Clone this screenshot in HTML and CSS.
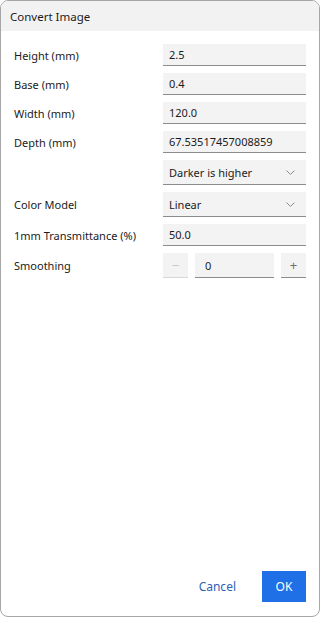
FILE: index.html
```html
<!DOCTYPE html>
<html lang="en">

<head>
    <meta charset="UTF-8">
    <meta name="viewport" content="width=device-width, initial-scale=1.0">
    <title>Convert Image</title>
    <link rel="stylesheet" href="styles.css">
</head>

<body>
    <div class="dialog">
        <div class="title-bar">Convert Image</div>
        <div class="form">
            <label class="label">Height (mm)</label>
            <div class="field">2.5</div>

            <label class="label">Base (mm)</label>
            <div class="field">0.4</div>

            <label class="label">Width (mm)</label>
            <div class="field">120.0</div>

            <label class="label">Depth (mm)</label>
            <div class="field">67.53517457008859</div>

            <span></span>
            <div class="field select">
                <span>Darker is higher</span>
                <svg class="chevron" width="9" height="5" viewBox="0 0 9 5"><path d="M0.5 0.5 L4.5 4.5 L8.5 0.5" fill="none" stroke="#8a8a8a" stroke-width="1"/></svg>
            </div>

            <label class="label">Color Model</label>
            <div class="field select">
                <span>Linear</span>
                <svg class="chevron" width="9" height="5" viewBox="0 0 9 5"><path d="M0.5 0.5 L4.5 4.5 L8.5 0.5" fill="none" stroke="#8a8a8a" stroke-width="1"/></svg>
            </div>

            <label class="label">1mm Transmittance (%)</label>
            <div class="field">50.0</div>

            <label class="label">Smoothing</label>
            <div class="spinner">
                <div class="field step disabled">&minus;</div>
                <div class="field">0</div>
                <div class="field step">+</div>
            </div>
        </div>
        <div class="footer">
            <button class="btn-text">Cancel</button>
            <button class="btn-primary">OK</button>
        </div>
    </div>
</body>

</html>
```

FILE: styles.css
```css
html, body {
    margin: 0;
    height: 100%;
    background-color: #ffffff;
}

body {
    font-family: "Noto Sans", "Open Sans", sans-serif;
    color: #1b1b1b;
}

.dialog {
    box-sizing: border-box;
    height: 617px;
    display: flex;
    flex-direction: column;
    border: 1px solid #a6a6a6;
    border-radius: 8px;
    background-color: #ffffff;
    overflow: hidden;
}

.title-bar {
    height: 30px;
    padding-left: 9px;
    display: flex;
    align-items: center;
    background-color: #f2f2f2;
    font-size: 11.5px;
}

.form {
    display: grid;
    grid-template-columns: 149px 1fr;
    row-gap: 7px;
    align-items: center;
    padding: 13px 13px 0 13px;
}

.label {
    font-size: 11px;
}

.field {
    box-sizing: border-box;
    height: 22px;
    padding: 0 6px;
    display: flex;
    align-items: center;
    background-color: #f3f3f3;
    border-bottom: 1px solid #8c8c8c;
    font-size: 11px;
}

.select {
    height: 25px;
    justify-content: space-between;
    padding-right: 11px;
}

.spinner {
    display: grid;
    grid-template-columns: 25px 1fr 25px;
    column-gap: 7px;
}

.spinner .field {
    height: 25px;
    padding-left: 10px;
}

.step {
    justify-content: center;
    padding: 0 !important;
    color: #6d6d6d;
    font-size: 13px;
}

.step.disabled {
    color: #c8c8c8;
    border-bottom-color: #d6d6d6;
}

.footer {
    margin-top: auto;
    display: flex;
    justify-content: flex-end;
    align-items: center;
    gap: 18px;
    padding: 0 13px 14px 0;
}

.footer button {
    font-family: inherit;
    font-size: 12px;
    border: none;
    cursor: pointer;
}

.btn-text {
    background: none;
    color: #2c5fb8;
    padding: 0 8px;
}

.btn-primary {
    width: 44px;
    height: 31px;
    background-color: #1f6fe6;
    color: #ffffff;
}
```
